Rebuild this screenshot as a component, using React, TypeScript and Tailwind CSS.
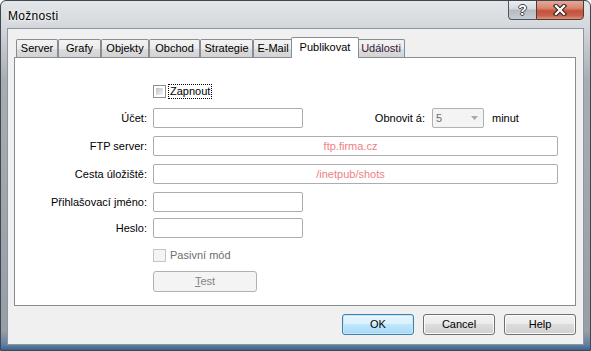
import React from "react";

type Tab = { label: string; w: string; active?: boolean };

const tabs: Tab[] = [
  { label: "Server", w: "w-[42px]" },
  { label: "Grafy", w: "w-[43px]" },
  { label: "Objekty", w: "w-[48px]" },
  { label: "Obchod", w: "w-[51px]" },
  { label: "Strategie", w: "w-[53px]" },
  { label: "E-Mail", w: "w-[40px]" },
  { label: "Publikovat", w: "w-[68px]", active: true },
  { label: "Události", w: "w-[48px]" },
];

function Checkbox({ disabled }: { disabled?: boolean }) {
  if (disabled) {
    return (
      <div className="w-[13px] h-[13px] border border-[#c3c5c8] bg-[#f4f4f4] shrink-0" />
    );
  }
  return (
    <div className="w-[13px] h-[13px] border border-[#8e8f8f] bg-white p-[2px] shrink-0">
      <div className="w-full h-full bg-[linear-gradient(135deg,#b9bec4,#e6e8ea_70%,#f4f4f4)]" />
    </div>
  );
}

function TextBox({ w, value }: { w: string; value?: string }) {
  return (
    <div
      className={`${w} h-[20px] border border-[#abadb3] rounded-[2px] bg-white flex items-center justify-center text-[#f08084]`}
    >
      {value && <span className="-ml-[10px]">{value}</span>}
    </div>
  );
}

function Row({ label, children }: { label: string; children: React.ReactNode }) {
  return (
    <div className="flex items-center h-[20px]">
      <div className="w-[132px] text-right">{label}</div>
      <div className="ml-[6px] flex items-center">{children}</div>
    </div>
  );
}

function DlgButton({ children, primary }: { children: React.ReactNode; primary?: boolean }) {
  return (
    <button
      className={
        primary
          ? "w-[72px] h-[21px] rounded-[3px] border border-[#3c7fb1] bg-[linear-gradient(180deg,#eaf6fd_0%,#d9f0fc_50%,#bee6fd_50%,#a7d9f5_100%)] shadow-[inset_0_0_0_1px_#c8e8f8] text-black"
          : "w-[72px] h-[21px] rounded-[3px] border border-[#707070] bg-[linear-gradient(180deg,#f2f2f2_0%,#ebebeb_50%,#dddddd_50%,#cfcfcf_100%)] shadow-[inset_0_0_0_1px_#fbfbfb] text-black"
      }
    >
      {children}
    </button>
  );
}

export default function App() {
  return (
    <div className="w-[591px] h-[351px] flex flex-col border border-[#3e4852] rounded-t-[6px] overflow-hidden bg-[linear-gradient(180deg,#e3e6e9_0px,#d3d7db_27px,#a8adb3_80px,#989ea5_330px,#5d7fa3_344px,#2f5580_351px)] font-['Liberation_Sans',Arial,sans-serif] text-[11px] text-black">
      {/* Title bar */}
      <div className="h-[27px] flex items-start justify-between pl-[7px] pr-[6px]">
        <div className="pt-[6px] text-[12px] tracking-[0.3px] [text-shadow:0_0_6px_#ffffff,0_0_3px_#ffffff]">
          Možnosti
        </div>
        <div className="flex -mt-[1px]">
          <div className="w-[28px] h-[20px] border border-[#4f5660] border-r-0 rounded-bl-[4px] bg-[linear-gradient(180deg,#eceef0_0%,#d4d8dc_45%,#b4bac1_50%,#c6ccd2_100%)] flex items-center justify-center">
            <span className="font-bold text-[14px] leading-none text-white [text-shadow:1px_0_0_#3a3f46,-1px_0_0_#3a3f46,0_1px_0_#3a3f46,0_-1px_0_#3a3f46]">
              ?
            </span>
          </div>
          <div className="w-[48px] h-[20px] border border-[#4f3a36] rounded-br-[4px] bg-[linear-gradient(180deg,#e6a898_0%,#d98470_40%,#c4523a_55%,#c9604a_80%,#dc927a_100%)] flex items-center justify-center">
            <svg width="14" height="12" viewBox="0 0 14 12">
              <path d="M3 2 L11 10 M11 2 L3 10" stroke="#3a2a28" strokeWidth="4.5" strokeLinecap="square" />
              <path d="M3 2 L11 10 M11 2 L3 10" stroke="#ffffff" strokeWidth="2.2" strokeLinecap="square" />
            </svg>
          </div>
        </div>
      </div>

      {/* Client area */}
      <div className="mx-[6px] mb-[5px] flex-1 border border-[#8e959c] bg-[#f0f0f0] flex flex-col pl-[6px] pr-[7px] pt-[8px] pb-[9px]">
        {/* Tabs */}
        <div className="h-[20px] flex items-end pl-[2px]">
          {tabs.map((t) =>
            t.active ? (
              <div
                key={t.label}
                className={`${t.w} h-[21px] -mb-[1px] -mx-[2px] relative z-10 bg-white border-t border-x border-[#898c95] rounded-t-[2px] flex items-center justify-center pb-[2px]`}
              >
                {t.label}
              </div>
            ) : (
              <div
                key={t.label}
                className={`${t.w} h-[18px] border-t border-x border-[#898c95] rounded-t-[2px] bg-[linear-gradient(180deg,#f3f3f3_0%,#ebebeb_50%,#dddddd_50%,#d3d3d3_100%)] flex items-center justify-center ${
                  t.label === "Události" ? "text-[#34183c]" : ""
                }`}
              >
                {t.label}
              </div>
            )
          )}
        </div>

        {/* Panel */}
        <div className="h-[249px] border border-[#898c95] bg-white flex flex-col">
          <div className="mt-[26px] h-[15px] flex items-center pl-[138px]">
            <Checkbox />
            <div className="ml-[2px] px-[1px] h-[15px] flex items-center border border-dotted border-[#000]">
              Zapnout
            </div>
          </div>

          <div className="mt-[9px]">
            <Row label="Účet:">
              <TextBox w="w-[150px]" />
              <div className="w-[122px] text-right">Obnovit á:</div>
              <div className="ml-[7px] w-[52px] h-[20px] border border-[#adb2b5] rounded-[2px] bg-[#f4f4f4] flex items-center justify-between pl-[3px] pr-[5px] text-[#6d6d6d]">
                <span>5</span>
                <svg width="7" height="4" viewBox="0 0 7 4">
                  <path d="M0 0 L7 0 L3.5 4 Z" fill="#a9a9a9" />
                </svg>
              </div>
              <div className="ml-[8px]">minut</div>
            </Row>
          </div>

          <div className="mt-[8px]">
            <Row label="FTP server:">
              <TextBox w="w-[405px]" value="ftp.firma.cz" />
            </Row>
          </div>

          <div className="mt-[8px]">
            <Row label="Cesta úložiště:">
              <TextBox w="w-[405px]" value="/inetpub/shots" />
            </Row>
          </div>

          <div className="mt-[8px]">
            <Row label="Přihlašovací jméno:">
              <TextBox w="w-[150px]" />
            </Row>
          </div>

          <div className="mt-[6px]">
            <Row label="Heslo:">
              <TextBox w="w-[150px]" />
            </Row>
          </div>

          <div className="mt-[11px] h-[13px] flex items-center pl-[138px]">
            <Checkbox disabled />
            <span className="ml-[4px] text-[#6d6d6d]">Pasivní mód</span>
          </div>

          <div className="mt-[9px] pl-[138px]">
            <div className="w-[104px] h-[21px] rounded-[3px] border border-[#adb2b5] bg-[#f4f4f4] flex items-center justify-center text-[#838383]">
              <span>
                <span className="underline">T</span>est
              </span>
            </div>
          </div>
        </div>

        {/* Buttons */}
        <div className="mt-[8px] flex justify-end gap-[9px]">
          <DlgButton primary>OK</DlgButton>
          <DlgButton>Cancel</DlgButton>
          <DlgButton>Help</DlgButton>
        </div>
      </div>
    </div>
  );
}
